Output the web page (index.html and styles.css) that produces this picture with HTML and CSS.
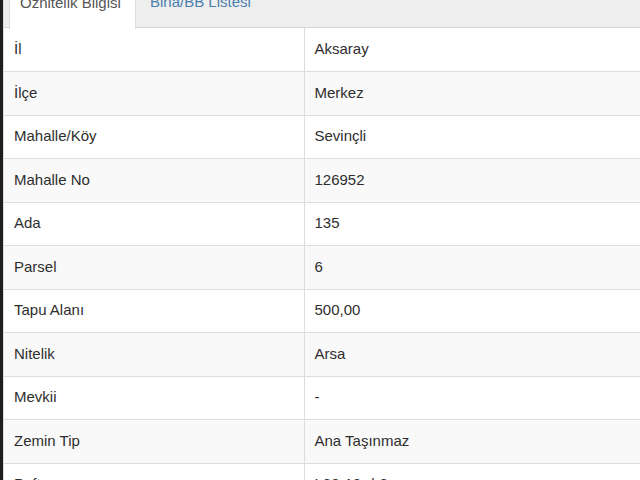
FILE: index.html
```html
<!DOCTYPE html>
<html lang="tr">
<head>
<meta charset="utf-8">
<link rel="stylesheet" href="styles.css">
</head>
<body>
<div class="frame">
  <div class="edge"></div>
  <div class="panel">
    <div class="tabbar">
      <div class="tabs">
        <div class="tab active">Öznitelik Bilgisi</div>
        <div class="tab">Bina/BB Listesi</div>
      </div>
    </div>
    <table class="attrs">
      <tr><td class="k">İl</td><td class="v">Aksaray</td></tr>
      <tr><td class="k">İlçe</td><td class="v">Merkez</td></tr>
      <tr><td class="k">Mahalle/Köy</td><td class="v">Sevinçli</td></tr>
      <tr><td class="k">Mahalle No</td><td class="v">126952</td></tr>
      <tr><td class="k">Ada</td><td class="v">135</td></tr>
      <tr><td class="k">Parsel</td><td class="v">6</td></tr>
      <tr><td class="k">Tapu Alanı</td><td class="v">500,00</td></tr>
      <tr><td class="k">Nitelik</td><td class="v">Arsa</td></tr>
      <tr><td class="k">Mevkii</td><td class="v">-</td></tr>
      <tr><td class="k">Zemin Tip</td><td class="v">Ana Taşınmaz</td></tr>
      <tr><td class="k">Pafta</td><td class="v">L32-13-d-3-c</td></tr>
    </table>
  </div>
</div>
</body>
</html>
```
FILE: styles.css
```css
html, body {
  margin: 0;
  padding: 0;
  background: #ffffff;
  overflow: hidden;
}
body {
  font-family: "Liberation Sans", Arial, sans-serif;
  font-size: 15px;
  color: #2e2e2e;
}
.frame {
  display: flex;
  height: 480px;
}
.edge {
  width: 3px;
  flex: none;
  background: #1e1e1e;
}
.panel {
  flex: 1;
  border-left: 1px solid #dcdcdc;
  min-width: 0;
}
.tabbar {
  display: flow-root;
  background: #eeeeee;
  border-bottom: 1px solid #d6d6d6;
  height: 27px;
}
.tabs {
  display: flex;
  margin-top: -20px;
  padding-left: 5px;
}
.tab {
  padding: 12px 13px 15px 12px;
  line-height: 20px;
  color: #4a80b0;
  margin-right: 2px;
}
.tab.active {
  background: #ffffff;
  color: #555555;
  border: 1px solid #dddddd;
  border-bottom: none;
  padding-left: 10px;
  padding-right: 13px;
  padding-bottom: 16px;
  width: 102px;
}
.attrs {
  width: 100%;
  border-collapse: collapse;
}
.attrs tr:nth-child(even) td {
  background: #f9f9f9;
}
.attrs td {
  height: 43.5px;
  padding: 0 10px 2px;
  border-bottom: 1px solid #dddddd;
  box-sizing: border-box;
  white-space: nowrap;
  vertical-align: middle;
}
.attrs td.k {
  width: 300px;
  border-right: 1px solid #dddddd;
}
.attrs td.v {
  padding-left: 10px;
}
```
